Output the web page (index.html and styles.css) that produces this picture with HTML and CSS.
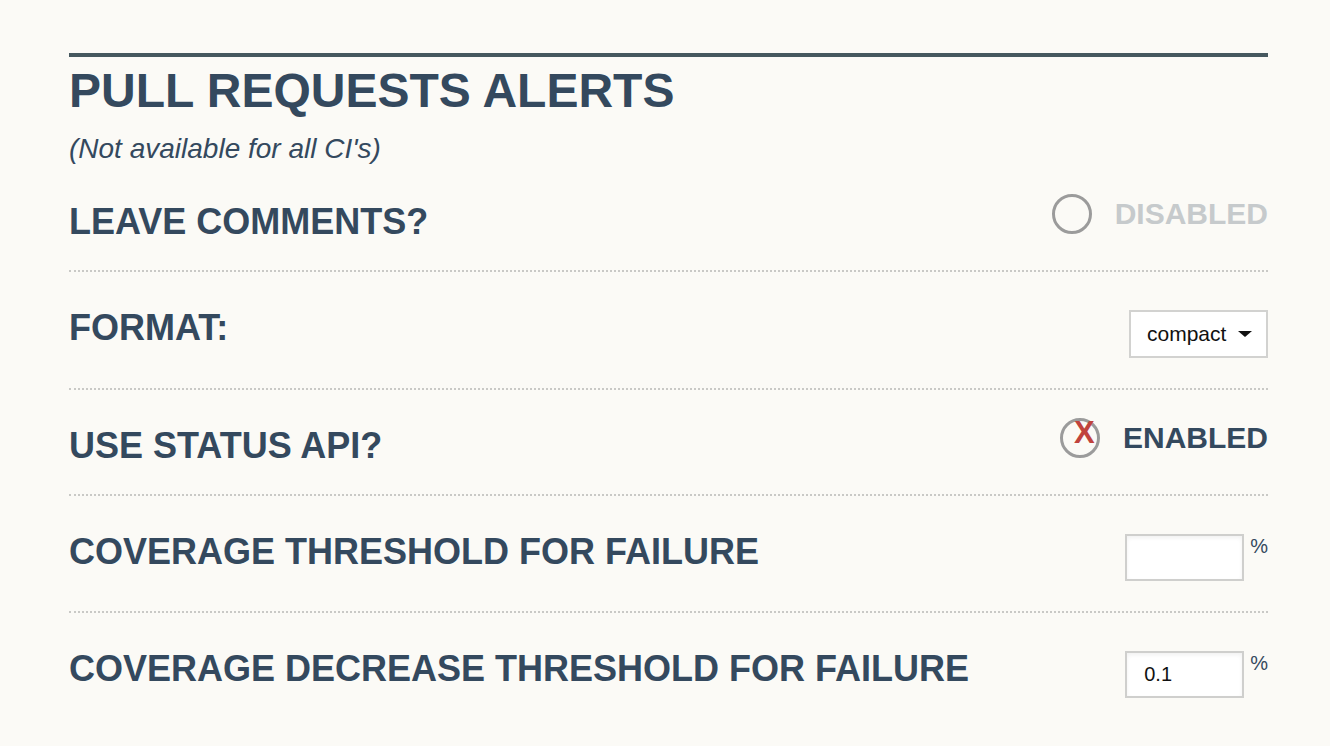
FILE: index.html
```html
<!DOCTYPE html>
<html>
<head>
<meta charset="utf-8">
<link rel="stylesheet" href="styles.css">
</head>
<body>
<section class="panel">
  <h1 class="title">PULL REQUESTS ALERTS</h1>
  <p class="subtitle">(Not available for all CI's)</p>

  <div class="row">
    <div class="label">LEAVE COMMENTS?</div>
    <div class="toggle toggle-off">
      <span class="radio"></span>
      <span class="toggle-text">DISABLED</span>
    </div>
  </div>

  <div class="row">
    <div class="label">FORMAT:</div>
    <div class="select">
      <span class="select-value">compact</span>
      <span class="caret"></span>
    </div>
  </div>

  <div class="row">
    <div class="label">USE STATUS API?</div>
    <div class="toggle toggle-on">
      <span class="radio"><span class="mark">X</span></span>
      <span class="toggle-text">ENABLED</span>
    </div>
  </div>

  <div class="row">
    <div class="label">COVERAGE THRESHOLD FOR FAILURE</div>
    <div class="field">
      <input class="input" type="text" value="">
      <span class="unit">%</span>
    </div>
  </div>

  <div class="row row-last">
    <div class="label">COVERAGE DECREASE THRESHOLD FOR FAILURE</div>
    <div class="field">
      <input class="input" type="text" value="0.1">
      <span class="unit">%</span>
    </div>
  </div>
</section>
</body>
</html>
```
FILE: styles.css
```css
html, body {
  margin: 0;
  padding: 0;
  background: #fbfaf6;
}

body {
  font-family: "Liberation Sans", Arial, Helvetica, sans-serif;
  color: #34495e;
}

.panel {
  width: 1199px;
  margin: 53px 0 0 69px;
  border-top: 4px solid #46585f;
}

.title {
  margin: 10px 0 0;
  font-size: 48px;
  line-height: 48px;
  font-weight: bold;
  color: #34495e;
}

.subtitle {
  margin: 21px 0 4px;
  font-size: 28px;
  line-height: 26px;
  font-style: italic;
}

.row {
  display: flex;
  justify-content: space-between;
  align-items: flex-start;
  padding: 38px 0 30px;
  border-bottom: 2px dotted #c9c9c6;
}

.row-last {
  border-bottom: none;
}

.label {
  font-size: 36px;
  line-height: 36px;
  font-weight: bold;
}

.toggle {
  display: flex;
  align-items: center;
  gap: 23px;
  margin-top: -10px;
}

.radio {
  position: relative;
  box-sizing: border-box;
  width: 40px;
  height: 40px;
  border: 3px solid #9b9b9b;
  border-radius: 50%;
}

.mark {
  position: absolute;
  left: 11px;
  top: -3px;
  font-size: 31px;
  line-height: 30px;
  font-weight: bold;
  color: #c0433d;
}

.toggle-text {
  font-size: 30px;
  line-height: 30px;
  font-weight: bold;
}

.toggle-off .toggle-text {
  color: #c6cacc;
}

.select {
  box-sizing: border-box;
  width: 139px;
  height: 48px;
  display: flex;
  align-items: center;
  justify-content: space-between;
  padding: 0 14px 0 16px;
  background: #ffffff;
  border: 2px solid #d2d2d0;
  color: #111;
  font-size: 21px;
}

.caret {
  width: 0;
  height: 0;
  border-left: 7px solid transparent;
  border-right: 7px solid transparent;
  border-top: 6px solid #111;
}

.field {
  display: flex;
  align-items: flex-start;
  gap: 6px;
}

.input {
  box-sizing: border-box;
  width: 119px;
  height: 47px;
  margin: 0;
  padding: 0 17px;
  border: 2px solid #cfcfcd;
  background: #fff;
  box-shadow: inset 0 2px 4px rgba(0, 0, 0, 0.06);
  font-family: "Liberation Sans", Arial, sans-serif;
  font-size: 20px;
  color: #111;
  outline: none;
}

.unit {
  font-size: 20px;
  line-height: 20px;
  margin-top: 2px;
}
```
